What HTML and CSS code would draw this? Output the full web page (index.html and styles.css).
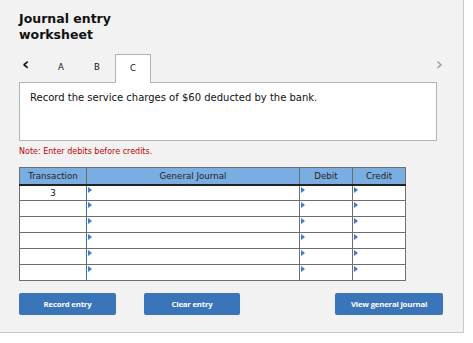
FILE: index.html
```html
<!DOCTYPE html>
<html lang="en">
<head>
    <meta charset="UTF-8">
    <title>Journal entry worksheet</title>
    <link rel="stylesheet" href="styles.css">
</head>
<body>
    <div class="panel">
        <h1>Journal entry<br>worksheet</h1>

        <nav class="tabs">
            <span class="nav-prev">&lsaquo;</span>
            <span class="tab">A</span>
            <span class="tab">B</span>
            <span class="tab active">C</span>
            <span class="nav-next">&rsaquo;</span>
        </nav>

        <div class="prompt">Record the service charges of $60 deducted by the bank.</div>

        <p class="note">Note: Enter debits before credits.</p>

        <table class="journal">
            <thead>
                <tr>
                    <th class="col-tr">Transaction</th>
                    <th class="col-gj">General Journal</th>
                    <th class="col-amt">Debit</th>
                    <th class="col-amt">Credit</th>
                </tr>
            </thead>
            <tbody>
                <tr><td class="tr">3</td><td class="mark"></td><td class="mark"></td><td class="mark"></td></tr>
                <tr><td class="tr"></td><td class="mark"></td><td class="mark"></td><td class="mark"></td></tr>
                <tr><td class="tr"></td><td class="mark"></td><td class="mark"></td><td class="mark"></td></tr>
                <tr><td class="tr"></td><td class="mark"></td><td class="mark"></td><td class="mark"></td></tr>
                <tr><td class="tr"></td><td class="mark"></td><td class="mark"></td><td class="mark"></td></tr>
                <tr><td class="tr"></td><td class="mark"></td><td class="mark"></td><td class="mark"></td></tr>
            </tbody>
        </table>

        <div class="actions">
            <button class="btn btn-record">Record entry</button>
            <button class="btn btn-clear">Clear entry</button>
            <button class="btn btn-view">View general journal</button>
        </div>
    </div>
</body>
</html>
```

FILE: styles.css
```css
* {
    box-sizing: border-box;
    margin: 0;
    padding: 0;
}

body {
    background: #fff;
    font-family: "DejaVu Sans", Verdana, sans-serif;
    color: #111;
}

.panel {
    width: 464px;
    height: 333px;
    background: #f2f2f2;
    border-right: 1px solid #c8c8c8;
    border-bottom: 1px solid #c8c8c8;
    padding: 11px 0 0 19px;
}

h1 {
    font-size: 12.5px;
    font-weight: bold;
    line-height: 16px;
    color: #111;
}

.tabs {
    display: flex;
    align-items: stretch;
    height: 28px;
    margin-top: 11px;
    width: 424px;
    position: relative;
    z-index: 1;
}

.nav-prev {
    width: 24px;
    font-size: 18px;
    font-weight: bold;
    line-height: 20px;
    padding-left: 3px;
}

.nav-next {
    margin-left: auto;
    font-size: 18px;
    line-height: 20px;
    color: #999;
}

.tab {
    width: 36px;
    text-align: center;
    font-size: 8.5px;
    line-height: 26px;
}

.tab.active {
    background: #fff;
    border: 1px solid #b4b4b4;
    border-bottom: none;
    height: 29px;
}

.prompt {
    width: 418px;
    height: 59px;
    background: #fff;
    border: 1px solid #b4b4b4;
    padding: 9px 10px;
    font-size: 10px;
}

.note {
    color: #c00000;
    font-size: 8px;
    margin-top: 6px;
    line-height: 10px;
}

.journal {
    margin-top: 10px;
    border-collapse: collapse;
    width: 387px;
    table-layout: fixed;
    background: #fff;
    font-family: "DejaVu Sans", Tahoma, sans-serif;
    font-size: 8.7px;
}

.journal th {
    background: #7aaee3;
    font-weight: normal;
    color: #222;
    height: 17px;
    border: 1px solid #6e6e6e;
    border-bottom: 2px solid #222;
}

.journal th + th {
    border-left: 1px solid #222;
}

.col-tr { width: 67px; }
.col-gj { width: 213px; }
.col-amt { width: 53px; }

.journal td {
    height: 16px;
    border: 1px solid #6e6e6e;
    vertical-align: top;
}

.journal td.tr {
    text-align: center;
    border-right: 1px solid #3b6ea8;
    line-height: 12px;
    padding-top: 1px;
}

.journal td.mark {
    position: relative;
}

.journal td.mark::before {
    content: "";
    position: absolute;
    left: 1px;
    top: 1px;
    border-left: 4px solid #3b7bd0;
    border-top: 3px solid transparent;
    border-bottom: 3px solid transparent;
}

.actions {
    display: flex;
    margin-top: 12px;
    width: 424px;
}

.btn {
    height: 22px;
    border: none;
    border-radius: 2px;
    background: #3a74b9;
    color: #fff;
    font-family: "Open Sans", sans-serif;
    font-weight: bold;
    font-size: 7.8px;
    letter-spacing: -0.2px;
}

.btn-record { width: 97px; }
.btn-clear { width: 96px; margin-left: 28px; }
.btn-view { width: 108px; margin-left: auto; }
```
